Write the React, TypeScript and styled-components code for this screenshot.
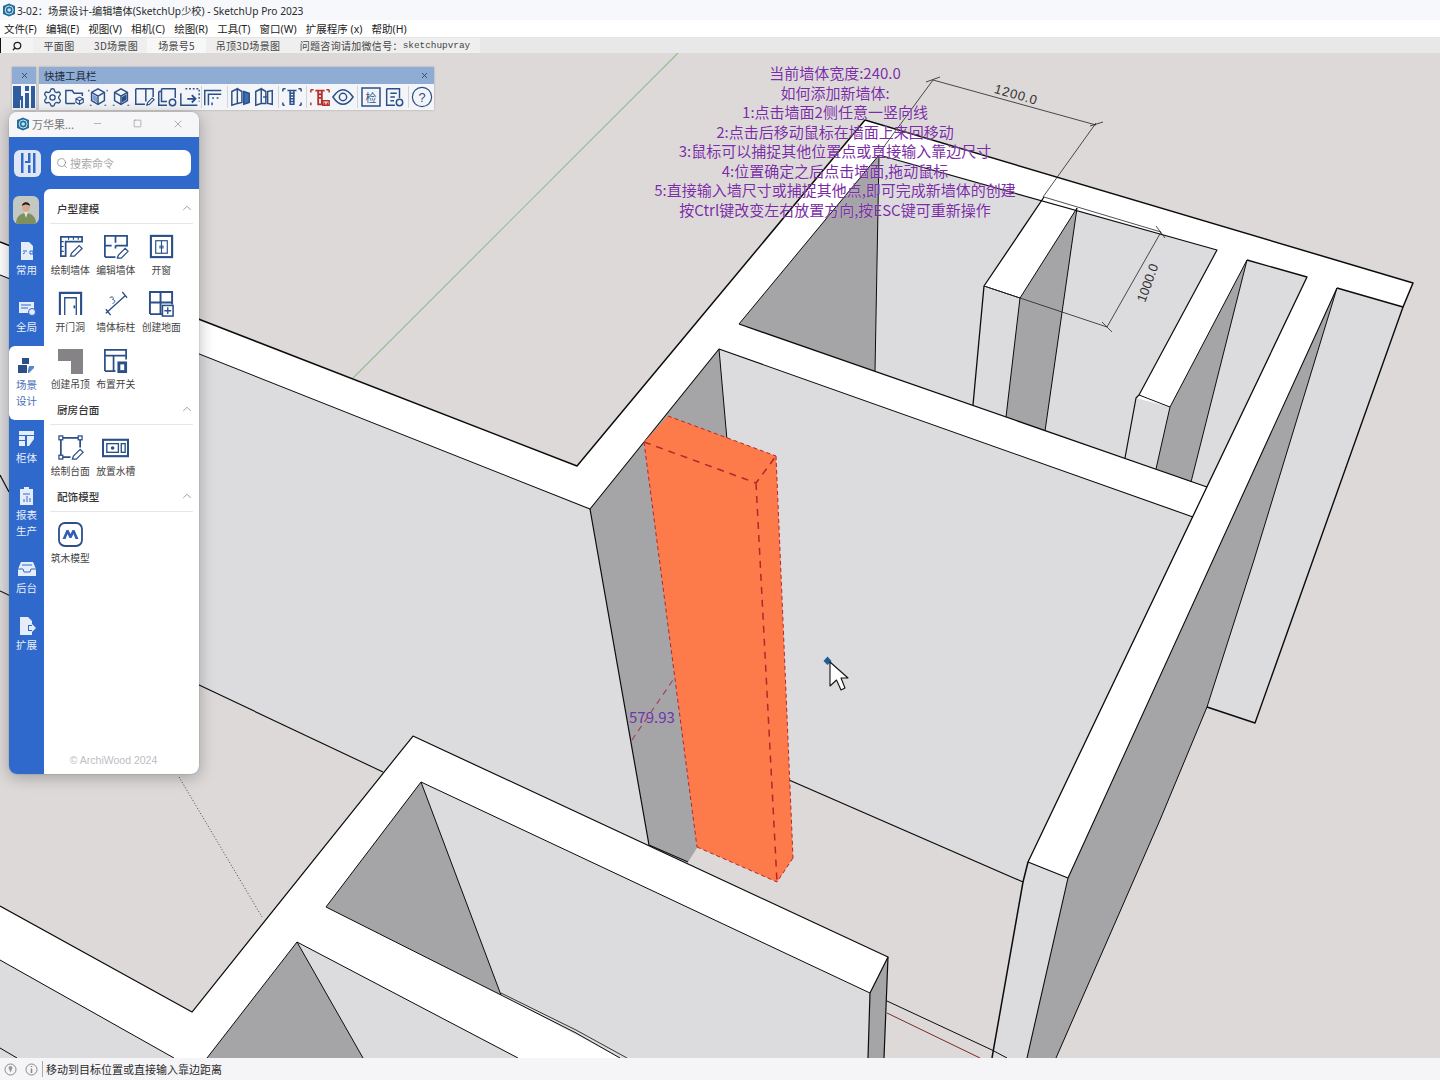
import React from "react";
import styled, { createGlobalStyle } from "styled-components";
import { Settings, Search, ChevronUp, Minus, Square, X } from "lucide-react";

const UI = `"Noto Sans", "Noto Sans CJK SC", sans-serif`;
const CJK = `"Noto Sans CJK SC", "Noto Sans", sans-serif`;
const NAVY = "#2b4f88";
const BLUE = "#3069cc";

const Global = createGlobalStyle`
  html, body { margin: 0; padding: 0; background: #dcd9d8; }
  #root { width: 1440px; height: 1080px; overflow: hidden; }
`;

const Page = styled.div`
  width: 1440px; height: 1080px; display: flex; flex-direction: column;
  font-family: ${UI}; overflow: hidden;
`;
const TitleBar = styled.div`
  height: 20px; flex: none; display: flex; align-items: center; gap: 1px; padding-left: 2px;
  background: #f6f8fc; color: #2a2a2a; font-size: 10.2px; white-space: nowrap;
`;
const MenuBar = styled.div`
  height: 17px; flex: none; display: flex; align-items: center; gap: 9.2px; padding-left: 4px;
  background: #ffffff; color: #222; font-size: 10.5px; white-space: nowrap;
  border-bottom: 1px solid #e4e4e4;
`;
const SceneTabs = styled.div`
  height: 15px; flex: none; display: flex; align-items: center;
  background: #e9e8e8; border-left: 1px solid #111; color: #444;
  font-family: ${CJK}; font-size: 10px; letter-spacing: .3px; white-space: nowrap;
`;
const SearchGlyph = styled.div`
  width: 32px; height: 15px; display: flex; align-items: center; justify-content: center; color: #222; background: #f4f4f4;
`;
const SceneTab = styled.div<{ $w: number; $on?: boolean }>`
  width: ${p => p.$w}px; height: 15px; display: flex; align-items: center; justify-content: center;
  background: ${p => (p.$on ? "#f7f7f7" : "#efefef")};
`;
const Mono = styled.span`
  font-family: "Liberation Mono", monospace; font-size: 9.4px; letter-spacing: 0;
`;
const Canvas = styled.div`
  position: relative; flex: 1; min-height: 0; background: #dcd9d8;
`;
const SceneSvg = styled.svg`
  display: block; width: 100%; height: 100%;
`;
const StatusBar = styled.div`
  height: 22px; flex: none; display: flex; align-items: center; background: #f5f5f7; color: #2a2a2a;
  font-size: 11px; font-family: ${CJK};
`;
const StatusIcons = styled.div`
  width: 43px; height: 16px; display: flex; align-items: center; gap: 8px; padding-left: 4px; box-sizing: border-box;
  border-right: 1px solid #aaa; margin-right: 3px; color: #888;
`;
const Notes = styled.div`
  position: absolute; left: 620px; top: 11px; width: 430px; text-align: center;
  font-family: ${CJK}; font-size: 15px; line-height: 19.5px; color: #7b2da6; margin-top: -1px;
  text-shadow: 0 0 1px rgba(255,255,255,.55);
`;
const Measure = styled.div`
  position: absolute; left: 629px; top: 654px; font-family: ${CJK}; font-size: 15px; line-height: 20px; color: #6f35ab;
`;

/* floating toolbars */
const ToolWin = styled.div<{ $x: number; $w: number }>`
  position: absolute; left: ${p => p.$x}px; top: 14px; width: ${p => p.$w}px; height: 43px;
  background: #f4f5f8; box-shadow: 0 0 2px rgba(0,0,0,.25);
`;
const ToolHead = styled.div`
  height: 17px; background: #8fadd4; display: flex; align-items: center; justify-content: space-between;
  padding: 0 5px; color: #1d2a3c; font-family: ${CJK}; font-size: 10.5px;
`;
const MiniHead = styled(ToolHead)`
  justify-content: center;
`;
const ToolBody = styled.div`
  height: 26px; display: flex; align-items: center; padding-left: 2px;
`;
const ToolCell = styled.div<{ $tight?: boolean }>`
  width: 22px; height: 24px; flex: none; display: flex; align-items: center; justify-content: center;
  margin-right: ${p => (p.$tight ? 0 : 1)}px;
`;
const LogoCell = styled.div`
  height: 26px; display: flex; align-items: center; justify-content: center;
`;
const ToolSep = styled.div<{ $wide?: boolean }>`
  width: 1px; height: 22px; flex: none; background: #cfd3da; margin: 0 ${p => (p.$wide ? 2.5 : 0)}px;
`;

/* main plugin panel */
const Panel = styled.div`
  position: absolute; left: 9px; top: 59px; width: 190px; height: 662px; display: flex; flex-direction: column;
  border-radius: 8px; overflow: hidden; background: #fff;
  box-shadow: 0 3px 16px rgba(0,0,0,.28), 0 0 1px rgba(0,0,0,.5);
`;
const PanelTitle = styled.div`
  height: 25px; flex: none; display: flex; align-items: center; background: #f6f6f8; color: #777;
  font-family: ${CJK}; font-size: 11px; padding: 0 0 2px 7px; box-sizing: border-box;
`;
const PanelName = styled.span`
  margin-left: 2px; width: 45px; white-space: nowrap;
`;
const WinBtn = styled.span`
  width: 40.5px; display: flex; justify-content: center; color: #666;
`;
const PanelTop = styled.div`
  height: 52px; flex: none; background: ${BLUE}; display: flex; align-items: center; gap: 10px; padding-left: 5px;
`;
const LogoTile = styled.div`
  width: 27px; height: 27px; border-radius: 6px; background: #dfe7f5; display: flex; align-items: center; justify-content: center;
`;
const SearchBox = styled.div`
  width: 140px; height: 26px; border-radius: 7px; background: #fff; display: flex; align-items: center; gap: 2px;
  padding-left: 5px; box-sizing: border-box; color: #aaa; font-family: ${CJK}; font-size: 11px;
`;
const PanelMain = styled.div`
  flex: 1; min-height: 0; display: flex; background: ${BLUE};
`;
const Rail = styled.div`
  width: 35px; flex: none; display: flex; flex-direction: column; padding-top: 7px;
`;
const Avatar = styled.div`
  width: 26px; height: 28px; margin: 0 0 8px 4px; border-radius: 6px; overflow: hidden; background: #c3c8c2;
`;
const RailItem = styled.div<{ $h: number; $on?: boolean }>`
  height: ${p => p.$h}px; box-sizing: border-box; padding-top: ${p => (p.$on ? 10 : 9)}px; display: flex; flex-direction: column; align-items: center;
  font-family: ${CJK}; font-size: 10.5px; line-height: 16px; text-align: center; gap: 1px;
  color: ${p => (p.$on ? "#4a6fb5" : "#e9effa")};
  background: ${p => (p.$on ? "#fff" : "transparent")};
  border-radius: ${p => (p.$on ? "6px 0 0 6px" : "0")};
`;
const Content = styled.div`
  flex: 1; background: #fff; border-radius: 6px 0 0 0; display: flex; flex-direction: column; padding-top: 1px;
`;
const SectionHead = styled.div`
  height: 29px; box-sizing: border-box; margin: 5px 6px 0; padding: 0 0 2px 7px; display: flex; align-items: center;
  justify-content: space-between; border-bottom: 1px solid #e6e6e8; color: #333;
  font-family: ${CJK}; font-size: 10.6px; font-weight: 500;
`;
const Chevron = styled(ChevronUp)`
  margin-right: -1px;
`;
const TileGrid = styled.div`
  display: grid; grid-template-columns: repeat(3, 45.5px); row-gap: 13px; padding: 9px 0 0 3.5px;
`;
const Tile = styled.div`
  height: 44px; display: flex; flex-direction: column; align-items: center; gap: 3px;
  font-family: ${CJK}; font-size: 9.8px; line-height: 14px; color: #444; white-space: nowrap;
`;
const Footer = styled.div`
  margin-top: auto; padding: 0 16px 7px 0; text-align: center; font-size: 10.5px; line-height: 14px; color: #bdbdc2;
  font-family: "Liberation Sans", sans-serif;
`;

const TIcon = ({ children, s = 22, c = NAVY }: { children: React.ReactNode; s?: number; c?: string }) => (
  <svg width={s} height={s} viewBox="0 0 24 24" fill="none" stroke={c} strokeWidth="1.6">{children}</svg>
);
const PIcon = ({ children }: { children: React.ReactNode }) => (
  <svg width="27" height="27" viewBox="0 0 28 28" fill="none" stroke={NAVY} strokeWidth="1.8">{children}</svg>
);
const RIcon = ({ children, c = "#e6edfa" }: { children: React.ReactNode; c?: string }) => (
  <svg width="20" height="20" viewBox="0 0 20 20" fill={c} stroke="none">{children}</svg>
);

const SuLogo = ({ s = 13 }: { s?: number }) => (
  <svg width={s} height={s} viewBox="0 0 14 14" fill="none">
    <path d="M7 .4 13 3v8L7 13.600 1 11V3z" fill="#1f6f9d" />
    <circle cx="7.200" cy="7" r="4" fill="none" stroke="#cfe3ee" strokeWidth="1" />
    <circle cx="7.200" cy="7" r="1.800" fill="#cfe3ee" />
  </svg>
);

/* sep: separator after the cell; wide: it takes six pixels instead of one */
const toolIcons: { sep?: "thin" | "wide"; el: React.ReactNode }[] = [
  { el: <Settings size={21} color={NAVY} strokeWidth={1.5} /> },
  { el: <TIcon><path d="M2 19V5h7l2 3h9v3M2 19h10" /><path d="M13 14l4-2 4 2v4l-4 2-4-2zM13 14l4 2 4-2M17 16v4" strokeWidth="1.2" /></TIcon> },
  { el: <TIcon><path d="M5 7l7-4 7 4v9l-7 4-7-4z" /><path d="M5 7l7 4 7-4M12 11v9" /><path d="M6 9l5 3v6l-5-3z" fill="#7fa0cf" stroke="none" /><path d="M2 4v2M22 4v2M3 21h2M19 21h2" strokeWidth="1.2" /></TIcon> },
  { el: <TIcon><path d="M5 7l7-4 7 4v9l-7 4-7-4z" /><path d="M5 7l7 4 7-4M12 11v9" /><path d="M13 12l5-3v6l-5 3z" fill={NAVY} stroke="none" /><path d="M3 21h2M19 21h2" strokeWidth="1.2" /></TIcon> },
  { el: <TIcon><path d="M3 3h19v9M3 3v17h10M14 3v14" /><path d="M15 21l1-3 5-5 2 2-5 5z" strokeWidth="1.2" /></TIcon> },
  { el: <TIcon><path d="M3 6h3M6 3h15v10M3 6v15h9M6 3v14h6" /><circle cx="18" cy="18" r="3.5" /></TIcon> },
  { sep: "thin", el: <TIcon><path d="M2 8v13h18" /><path d="M7 3h15v14" strokeDasharray="2 2" /><path d="M9 14h8M14 10l4 4-4 4" strokeWidth="2" /></TIcon> },
  { sep: "wide", el: <TIcon><path d="M3 21V5h18" /><path d="M7 21V9h14" /><path d="M11 13h2M16 13h2M11 21v-3" /></TIcon> },
  { el: <TIcon><path d="M2 6l6-3v16l-6 2z" /><path d="M8 3l5 3v12l-5 1" /><path d="M15 6l6 2v10l-6 2z" fill="#3f6cb5" /></TIcon> },
  { sep: "wide", el: <TIcon><path d="M3 6l6-3v16l-6 2zM9 3l5 3v13l-5 0" /><path d="M16 6l5-1v15l-5-1z" /><path d="M11 12h4" /></TIcon> },
  { sep: "wide", el: <TIcon><path d="M2 3h3M19 3h3M2 3v3M22 3v3M2 21v-3M22 21v-3M2 21h2M20 21h2" /><path d="M7 5h10M9 8h6M9 11h6M9 14h6M9 17h6M10 5v15h4V5" /></TIcon> },
  { el: <TIcon c="#b7312c"><path d="M2 4h3M19 4h3M2 4v3M22 4v3M2 21v-3" /><path d="M7 5h10M9 9h6M9 13h6M10 5v15h4V5" strokeWidth="2" /><path d="M15 21v-5h7v5zM17 21v-3M20 21v-3" /></TIcon> },
  { sep: "wide", el: <TIcon s={24}><path d="M1 12c4-6 7-8 11-8s7 2 11 8c-4 6-7 8-11 8s-7-2-11-8z" /><circle cx="12" cy="12" r="4" /></TIcon> },
  { el: <svg width="22" height="22" viewBox="0 0 22 22"><rect x="2" y="2" width="18" height="18" fill="none" stroke={NAVY} strokeWidth="1.5" /><text x="11" y="15.5" textAnchor="middle" fontFamily="Noto Sans CJK SC" fontSize="11" fill={NAVY}>检</text></svg> },
  { sep: "wide", el: <TIcon><path d="M4 3h14v10M4 3v18h9M8 8h7M8 12h5M8 16h4" /><circle cx="18" cy="18" r="3.5" /></TIcon> },
  { el: <svg width="24" height="24" viewBox="0 0 24 24"><circle cx="12" cy="12" r="10.5" fill="none" stroke={NAVY} strokeWidth="1.3" /><text x="12" y="17" textAnchor="middle" fontFamily="Liberation Sans" fontSize="14" fill={NAVY}>?</text></svg> },
];

type T = { label: string; el: React.ReactNode };
const house: T[] = [
  { label: "绘制墙体", el: <PIcon><path d="M4 24V4h22v5H9v15z" /><path d="M4 9h3M4 14h3M4 19h3M12 4v3M17 4v3M22 4v3" strokeWidth="1.2" /><path d="M14 24l1-3 8-8 3 3-8 8z" strokeWidth="1.3" /></PIcon> },
  { label: "编辑墙体", el: <PIcon><path d="M3 25V3h23v11M3 25h11" /><path d="M3 13h7M14 3v7M14 13h12M14 13v3" /><path d="M16 26l1-3 7-7 3 3-7 7z" strokeWidth="1.3" /></PIcon> },
  { label: "开窗", el: <PIcon><rect x="3" y="3" width="22" height="22" strokeWidth="2.2" /><rect x="8" y="8" width="12" height="13" strokeWidth="1.2" /><path d="M14 8v13M12.5 13v3M15.5 13v3" strokeWidth="1.2" /></PIcon> },
  { label: "开门洞", el: <PIcon><path d="M3 26V3h22v23" strokeWidth="2.2" /><path d="M8 26V8h12v18" strokeWidth="1.4" /><path d="M18 16v3" /></PIcon> },
  { label: "墙体标柱", el: <PIcon><path d="M4 24L24 6M4 20l5 6M21 2l5 6" strokeWidth="1.4" /><path d="M8 8c3-2 5 0 3 2 3 0 3 3 0 4" strokeWidth="1" /></PIcon> },
  { label: "创建地面", el: <PIcon><path d="M2 25V2h23v13M2 25h13M2 13h23M13 2v23" strokeWidth="2" /><rect x="15" y="16" width="11" height="11" fill="#fff" strokeWidth="1.6" /><path d="M20.5 18v7M17 21.5h7" strokeWidth="1.4" /></PIcon> },
  { label: "创建吊顶", el: <svg width="27" height="27" viewBox="0 0 27 27"><path d="M1 2h25v25H14V14H1z" fill="#868387" /></svg> },
  { label: "布置开关", el: <PIcon><path d="M3 25V3h22v10M3 25h11M3 9h22M12 9v16" /><rect x="16" y="15" width="10" height="12" fill={NAVY} stroke="none" /><rect x="19" y="18" width="4" height="6" fill="#fff" stroke="none" /></PIcon> },
];
const kitchen: T[] = [
  { label: "绘制台面", el: <PIcon><path d="M4 4h20v10M4 4v20h10" /><g fill="#fff" strokeWidth="1.3"><rect x="2" y="2" width="4" height="4" /><rect x="22" y="2" width="4" height="4" /><rect x="2" y="22" width="4" height="4" /></g><path d="M16 26l1-3 7-7 3 3-7 7z" strokeWidth="1.3" /></PIcon> },
  { label: "放置水槽", el: <PIcon><rect x="1" y="6" width="26" height="17" strokeWidth="2.2" /><rect x="5" y="10" width="12" height="9" strokeWidth="1.4" /><rect x="20" y="10" width="4" height="9" strokeWidth="1.4" /><circle cx="11" cy="14.5" r="1" fill={NAVY} /></PIcon> },
];
const decor: T[] = [
  { label: "筑木模型", el: <svg width="27" height="27" viewBox="0 0 27 27"><rect x="2" y="2" width="23" height="23" rx="6" fill="#fff" stroke={NAVY} strokeWidth="1.8" /><path d="M5.5 18l4-9h2l2 4 2-4h2l4 9h-3l-2-5-2 4h-2l-2-4-2 5z" fill="#2f5fb0" /></svg> },
];

const Tiles = ({ items }: { items: T[] }) => (
  <TileGrid>
    {items.map(t => (
      <Tile key={t.label}>
        {t.el}
        <span>{t.label}</span>
      </Tile>
    ))}
  </TileGrid>
);
const Head = ({ children }: { children: React.ReactNode }) => (
  <SectionHead>
    <span>{children}</span>
    <Chevron size={14} color="#777" strokeWidth={1.2} />
  </SectionHead>
);

const F = {
  ground: "#dcd9d8",
  face: "#dcdbde",
  dark: "#a5a4a7",
  white: "#ffffff",
  ink: "#0c0c0c",
  orange: "#fd7a4b",
  red: "#b5262a",
};

const Poly = ({ pts, fill }: { pts: string; fill: string }) => <polygon points={pts} fill={fill} stroke="none" />;
const lines: [string, number][] = [
  ["0,242 577,466 865,120 1413,283 1403,307", 1.5],
  ["1337,288 1403,307 1313,560 1255,723 1207,707", 1.4],
  ["1337,288 1254,560 1207,707 1160,820 1056,1058", 1],
  ["1337,288 1068,878 1027,1058", 1.1],
  ["1068,878 1028,862 1307,277 1247,260", 1.3],
  ["1028,862 1023,882 992,1058", 1.5],
  ["0,275 590,509 719,349 1193,517", 1.1],
  ["590,509 649,845 688,862", 1.2],
  ["719,349 727,440", 1],
  ["739,324 879,155 875,371", 1],
  ["739,324 1207,487", 1.3],
  ["879,155 1217,250 1139,395 1136,398 1125,458", 1.2],
  ["1020,298 1077,208 1045,431", 1],
  ["1044,197 984,286 973,405", 1.3],
  ["984,286 1020,298 1006,417", 1],
  ["1139,395 1170,407 1156,469", 1],
  ["1170,407 1247,260 1191,482", 1],
  ["789,780 1023,882", 1.2],
  ["0,591 383,772", 1.1],
  ["0,906 192,1012 413,736 888,957 870,993 868,1058", 1.2],
  ["888,957 884,1058", 1.2],
  ["0,960 174,1058", 1],
  ["421,782 870,993", 1],
  ["421,782 326,907 501,995 421,782", 1],
  ["501,995 576,1033 620,1058", 1],
  ["501,993 576,1030 627,1058", .8],
  ["297,942 207,1058", 1],
  ["297,942 363,1058", 1],
  ["297,942 518,1058", 1],
  ["887,1001 992,1050 1007,1058", 1],
  ["0,1048 17,1058", 1],
  ["0,475 9,492", 1.2],
];

const Scene = () => (
  <SceneSvg viewBox="0 53 1440 1005" preserveAspectRatio="none">
    <line x1="353" y1="378" x2="678" y2="53" stroke="#9dbb97" strokeWidth="1.2" />
    <Poly fill={F.white} pts="0,242 577,466 865,120 1413,283 1403,307 1337,288 1068,878 1028,862 1193,517 719,349 590,509 0,275" />
    {/* big left wall face */}
    <Poly fill={F.face} pts="0,275 590,509 649,845 413,736 383,772 0,591" />
    {/* main room */}
    <Poly fill={F.face} pts="719,349 1193,517 1028,862 1023,882 789,780 700,700" />
    <Poly fill={F.dark} pts="719,349 590,509 649,845 688,862 697,848 727,440" />
    {/* rear rooms */}
    <Poly fill={F.face} pts="739,324 879,155 1217,250 1139,395 1136,398 1125,458" />
    <Poly fill={F.dark} pts="739,324 879,155 875,371" />
    <Poly fill={F.white} pts="1044,197 1077,208 1020,298 984,286" />
    <Poly fill={F.face} pts="984,286 1020,298 1006,417 973,405" />
    <Poly fill={F.dark} pts="1077,208 1020,298 1006,417 1045,431" />
    <Poly fill={F.white} pts="1217,250 1247,260 1170,407 1139,395" />
    <Poly fill={F.face} pts="1136,398 1170,407 1156,469 1125,458" />
    <Poly fill={F.dark} pts="1247,260 1170,407 1156,469 1191,482" />
    <Poly fill={F.face} pts="1247,260 1307,277 1207,487 1191,482" />
    {/* right wall */}
    <Poly fill={F.dark} pts="1337,288 1068,878 1027,1058 1056,1058 1160,820 1207,707 1254,560" />
    <Poly fill={F.face} pts="1337,288 1403,307 1313,560 1255,723 1207,707 1254,560" />
    <Poly fill={F.face} pts="1028,862 1068,878 1027,1058 992,1058 1023,882" />
    {/* lower block */}
    <Poly fill={F.white} pts="0,906 192,1012 413,736 888,957 870,993 868,1058 0,1058" />
    <Poly fill={F.face} pts="421,782 870,993 868,1058 620,1058 501,995" />
    <Poly fill={F.dark} pts="421,782 326,907 501,995" />
    <Poly fill={F.face} pts="297,942 518,1058 363,1058" />
    <Poly fill={F.dark} pts="297,942 207,1058 363,1058" />
    <Poly fill={F.dark} pts="888,957 870,993 868,1058 884,1058" />
    <Poly fill={F.face} pts="0,960 174,1058 0,1058" />
    <g fill="none" stroke={F.ink} strokeLinejoin="round">
      {lines.map(([p, w]) => <polyline key={p} points={p} strokeWidth={w} />)}
    </g>
    <line x1="887" y1="1013" x2="980" y2="1058" stroke="#7a2a2a" strokeWidth="1" />
    <line x1="179" y1="777" x2="262" y2="917" stroke="#444" strokeWidth="1" strokeDasharray="1 2" />
    {/* dimensions */}
    <g fill="none" stroke="#222" strokeWidth=".8">
      <path d="M880 152 933 80M1043 197 1096 123M926 82 940 77M1090 126 1103 122M933 80 1096 125" />
      <path d="M1044 197 1161 232M1107 327 1161 232M984 286 1107 327M1156 226 1165 238M1102 322 1112 332" />
    </g>
    <text x="1016" y="99" textAnchor="middle" transform="rotate(16 1016 95)" fontFamily="Liberation Sans" fontSize="13" letterSpacing=".8" fill="#333">1200.0</text>
    <text x="1148" y="287" textAnchor="middle" transform="rotate(-70 1148 283)" fontFamily="Liberation Sans" fontSize="13" fill="#333">1000.0</text>
    {/* moved piece */}
    <Poly fill={F.orange} pts="644,442 668,416 776,456 793,858 777,882 697,847" />
    <g fill="none" stroke={F.red} strokeWidth="1.5" strokeDasharray="7 6">
      <path d="M644 442 756 483 776 456M756 483 777 882" />
    </g>
    <g fill="none" stroke={F.red} strokeWidth="1" strokeDasharray="4 3">
      <path d="M668 416 776 456M776 456 793 858M697 847 777 882 793 858M644 442 697 847" />
    </g>
    <path d="M632 740 675 677" stroke="#b03a50" strokeWidth="1.1" strokeDasharray="6 5" fill="none" />
    {/* cursor */}
    <path d="M823.500 661 827.500 656.500 831.500 661 827.500 665z" fill="#1f5d96" />
    <path d="M830 662 848 678 841 678 845 688 841 690 836.500 680 830 686z" fill="#fff" stroke="#111" strokeWidth="1.1" strokeLinejoin="round" />
  </SceneSvg>
);

export default function App() {
  return (
    <Page>
      <Global />
      <TitleBar>
        <SuLogo s={14} />
        <span>3-02：场景设计-编辑墙体(SketchUp少校) - SketchUp Pro 2023</span>
      </TitleBar>
      <MenuBar>
        {["文件(F)", "编辑(E)", "视图(V)", "相机(C)", "绘图(R)", "工具(T)", "窗口(W)", "扩展程序 (x)", "帮助(H)"].map(m => (
          <span key={m}>{m}</span>
        ))}
      </MenuBar>
      <SceneTabs>
        <SearchGlyph><Search size={10} strokeWidth={3} style={{ transform: "scaleX(-1)" }} /></SearchGlyph>
        <SceneTab $w={52}>平面图</SceneTab>
        <SceneTab $w={62}>3D场景图</SceneTab>
        <SceneTab $w={59} $on>场景号5</SceneTab>
        <SceneTab $w={84}>吊顶3D场景图</SceneTab>
        <SceneTab $w={190}>问题咨询请加微信号：<Mono>sketchupvray</Mono></SceneTab>
      </SceneTabs>
      <Canvas>
        <Scene />
        <Notes>
          当前墙体宽度:240.0<br />
          如何添加新墙体:<br />
          1:点击墙面2侧任意一竖向线<br />
          2:点击后移动鼠标在墙面上来回移动<br />
          3:鼠标可以捕捉其他位置点或直接输入靠边尺寸<br />
          4:位置确定之后点击墙面,拖动鼠标<br />
          5:直接输入墙尺寸或捕捉其他点,即可完成新墙体的创建<br />
          按Ctrl键改变左右放置方向,按ESC键可重新操作
        </Notes>
        <Measure>579.93</Measure>

        <ToolWin $x={12} $w={24}>
          <MiniHead><X size={9} color="#24344c" /></MiniHead>
          <LogoCell>
            <svg width="22" height="22" viewBox="0 0 22 22" fill="#2f5d9f">
              <path d="M0 0h8v10h2V0h0v22H8v-8H7v8H0zM12 0h4v5h-4zM12 7h4v15h-4zM18 0h4v22h-4z" />
            </svg>
          </LogoCell>
        </ToolWin>
        <ToolWin $x={39} $w={395}>
          <ToolHead><span>快捷工具栏</span><X size={9} color="#24344c" /></ToolHead>
          <ToolBody>
            {toolIcons.map((t, i) => (
              <React.Fragment key={i}>
                <ToolCell $tight={!!t.sep}>{t.el}</ToolCell>
                {t.sep && <ToolSep $wide={t.sep === "wide"} />}
              </React.Fragment>
            ))}
          </ToolBody>
        </ToolWin>

        <Panel>
          <PanelTitle>
            <SuLogo s={14} />
            <PanelName>万华果...</PanelName>
            <WinBtn><Minus size={11} strokeWidth={1} /></WinBtn>
            <WinBtn><Square size={9} strokeWidth={1.2} /></WinBtn>
            <WinBtn><X size={12} strokeWidth={1} /></WinBtn>
          </PanelTitle>
          <PanelTop>
            <LogoTile>
              <svg width="20" height="22" viewBox="0 0 20 22" fill={BLUE}>
                <path d="M3 1h2.500v20H3zM7 9h3V1h2.500v10H7zM10 13h2.500v8H10zM15 1h2.500v20H15z" />
              </svg>
            </LogoTile>
            <SearchBox>
              <Search size={12} color="#888" strokeWidth={1.5} />
              <span>搜索命令</span>
            </SearchBox>
          </PanelTop>
          <PanelMain>
            <Rail>
              <Avatar>
                <svg width="26" height="28" viewBox="0 0 26 28">
                  <path d="M3 28c0-7 4-11 10-11s10 4 10 11z" fill="#7f8f5e" />
                  <path d="M11 16h4l-2 6z" fill="#e8e3d8" />
                  <ellipse cx="13" cy="11" rx="4" ry="5" fill="#d4ab90" />
                  <path d="M9 10c0-5 8-5 8 0-3-2-5-2-8 0z" fill="#1f1c1b" />
                </svg>
              </Avatar>
              <RailItem $h={57}>
                <RIcon><path d="M4 1h8l4 4v14H4z" /><path d="M6 10h4M6 13l2-1.500M13 10h3v3h-3z" fill="none" stroke={BLUE} /></RIcon>
                常用
              </RailItem>
              <RailItem $h={57}>
                <RIcon><path d="M2 4h15v11H2z" /><path d="M4 7h10M4 10h7" stroke={BLUE} /><circle cx="15" cy="14" r="3.500" stroke={BLUE} /></RIcon>
                全局
              </RailItem>
              <RailItem $h={74} $on>
                <RIcon c={NAVY}><path d="M5 2h7v6H5zM1 9h9v8H1z" /><path d="M12 10h5v2l-5 5h-1v-3z" fill="#5b86cd" /></RIcon>
                <span>场景<br />设计</span>
              </RailItem>
              <RailItem $h={57}>
                <RIcon><path d="M2 2h15v4H2zM2 7h6v4H2zM2 12h6v5H2zM10 7h7v3l-5 7h-2z" /></RIcon>
                柜体
              </RailItem>
              <RailItem $h={73}>
                <RIcon><path d="M3 3h4V1h5v2h4v16H3z" /><path d="M7 13v3M10 10v6M13 12v4M6 8h7" stroke={BLUE} /></RIcon>
                <span>报表<br />生产</span>
              </RailItem>
              <RailItem $h={57}>
                <RIcon><path d="M4 3h12l3 7v7H1v-7z" /><path d="M1 10h5l1 3h6l1-3h5M5 6h10" fill="none" stroke={BLUE} /></RIcon>
                后台
              </RailItem>
              <RailItem $h={55}>
                <RIcon><path d="M3 1h8l4 4v4h-4v6h4v4H3z" /><path d="M12 10h3V8l4 4-4 4v-2h-3z" /></RIcon>
                扩展
              </RailItem>
            </Rail>
            <Content>
              <Head>户型建模</Head>
              <Tiles items={house} />
              <Head>厨房台面</Head>
              <Tiles items={kitchen} />
              <Head>配饰模型</Head>
              <Tiles items={decor} />
              <Footer>© ArchiWood 2024</Footer>
            </Content>
          </PanelMain>
        </Panel>
      </Canvas>
      <StatusBar>
        <StatusIcons>
          <svg width="13" height="13" viewBox="0 0 13 13" fill="none" stroke="#888"><circle cx="6.500" cy="6.500" r="5.500" /><path d="M6.500 9.500 4.500 5a2 2 0 1 1 4 0z" fill="#999" stroke="none" /></svg>
          <svg width="13" height="13" viewBox="0 0 13 13" fill="none" stroke="#888"><circle cx="6.500" cy="6.500" r="5.500" /><path d="M6.500 5.500v4.500M6.500 3v1" strokeWidth="1.500" /></svg>
        </StatusIcons>
        <span>移动到目标位置或直接输入靠边距离</span>
      </StatusBar>
    </Page>
  );
}
